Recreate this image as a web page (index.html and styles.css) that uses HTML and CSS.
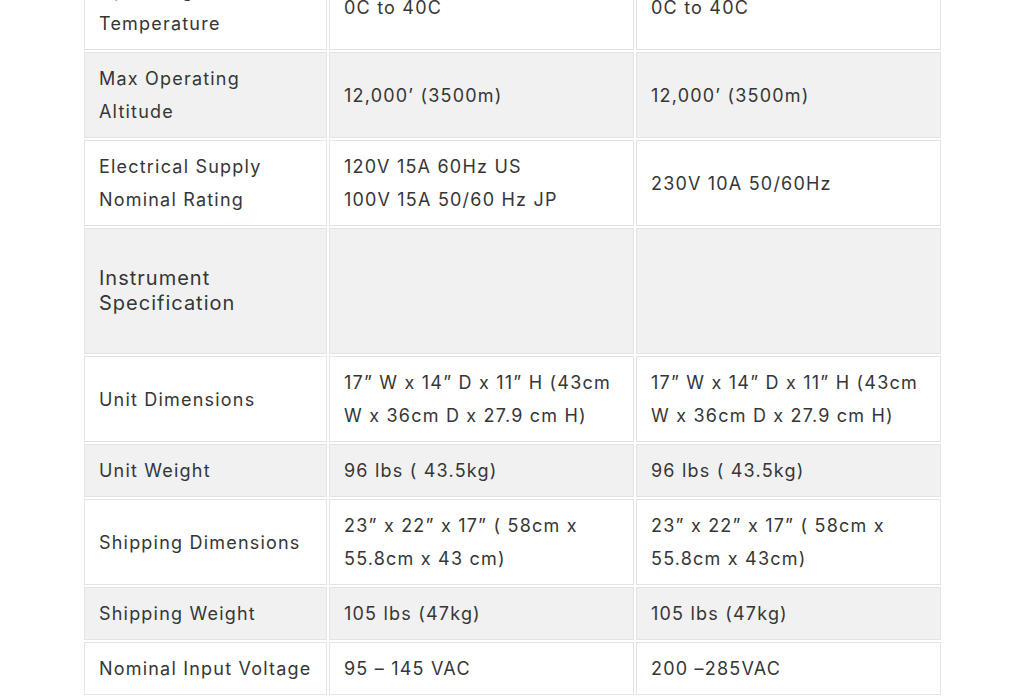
FILE: index.html
```html
<!DOCTYPE html>
<html lang="en">
<head>
<meta charset="utf-8">
<title>Specifications</title>
<link rel="stylesheet" href="styles.css">
</head>
<body>
<div class="page">
  <table class="spec">
    <colgroup>
      <col class="c1">
      <col class="c2">
      <col class="c3">
    </colgroup>
    <tbody>
      <tr class="odd">
        <td>Operating<br>Temperature</td>
        <td>0C to 40C</td>
        <td>0C to 40C</td>
      </tr>
      <tr class="even">
        <td>Max Operating<br>Altitude</td>
        <td>12,000’ (3500m)</td>
        <td>12,000’ (3500m)</td>
      </tr>
      <tr class="odd">
        <td>Electrical Supply<br>Nominal Rating</td>
        <td>120V 15A 60Hz US<br>100V 15A 50/60 Hz JP</td>
        <td>230V 10A 50/60Hz</td>
      </tr>
      <tr class="even section">
        <td><h4 class="section-title">Instrument<br>Specification</h4></td>
        <td></td>
        <td></td>
      </tr>
      <tr class="odd">
        <td>Unit Dimensions</td>
        <td>17” W x 14” D x 11” H (43cm<br>W x 36cm D x 27.9 cm H)</td>
        <td>17” W x 14” D x 11” H (43cm<br>W x 36cm D x 27.9 cm H)</td>
      </tr>
      <tr class="even">
        <td>Unit Weight</td>
        <td>96 lbs ( 43.5kg)</td>
        <td>96 lbs ( 43.5kg)</td>
      </tr>
      <tr class="odd">
        <td>Shipping Dimensions</td>
        <td>23” x 22” x 17” ( 58cm x<br>55.8cm x 43 cm)</td>
        <td>23” x 22” x 17” ( 58cm x<br>55.8cm x 43cm)</td>
      </tr>
      <tr class="even">
        <td>Shipping Weight</td>
        <td>105 lbs (47kg)</td>
        <td>105 lbs (47kg)</td>
      </tr>
      <tr class="odd">
        <td>Nominal Input Voltage</td>
        <td>95 – 145 VAC</td>
        <td>200 –285VAC</td>
      </tr>
    </tbody>
  </table>
</div>
</body>
</html>
```

FILE: styles.css
```css
* { box-sizing: border-box; }

html, body {
  margin: 0;
  padding: 0;
  background: #ffffff;
  overflow: hidden;
}

body {
  font-family: Inter, "Noto Sans", "Liberation Sans", sans-serif;
  color: #363636;
}

.page {
  margin-top: -38px;
  padding: 0 81px 0 82px;
}

.spec {
  table-layout: fixed;
  border-collapse: separate;
  border-spacing: 2px;
  width: 861px;
}

.spec .c1 { width: 243px; }
.spec .c2 { width: 305px; }
.spec .c3 { width: 305px; }

.spec td {
  border: 1px solid #e3e3e3;
  padding: 9px 14px;
  font-size: 18px;
  line-height: 33px;
  letter-spacing: 1.2px;
  vertical-align: middle;
}

.spec .odd td { background: #ffffff; }
.spec .even td { background: #f1f1f1; }

.section-title {
  margin: 28px 0;
  font-size: 20px;
  font-weight: 400;
  line-height: 25px;
  letter-spacing: 1px;
}
```
